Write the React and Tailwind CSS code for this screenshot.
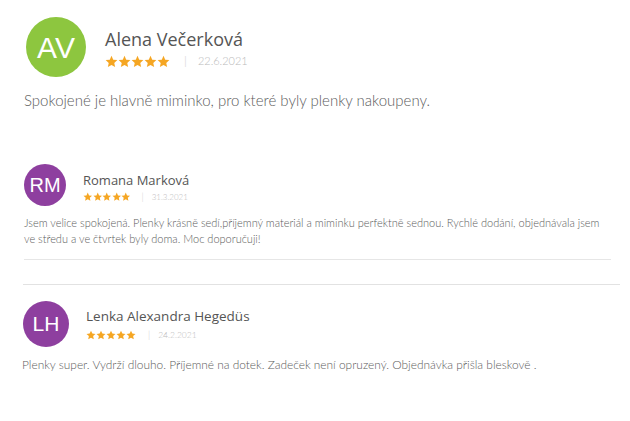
const reviews = [
  {
    initials: "AV",
    name: "Alena Večerková",
    date: "22.6.2021",
    text: "Spokojené je hlavně miminko, pro které byly plenky nakoupeny.",
    color: "bg-[#8dc63f]",
  },
];

const Star = ({ size }) => (
  <svg width={size} height={size} viewBox="0 0 24 24" fill="#f5a623">
    <path d="M12 1.5l3.2 7.1 7.6.8-5.7 5.2 1.6 7.6L12 18.3l-6.7 3.9 1.6-7.6L1.2 9.4l7.6-.8z" />
  </svg>
);

const Stars = ({ size }) => (
  <div className="flex">
    {[0, 1, 2, 3, 4].map((i) => (
      <Star key={i} size={size} />
    ))}
  </div>
);

export default function App() {
  const r = reviews[0];
  return (
    <div className="w-[630px] h-[421px] bg-white text-[#5c5c5c] font-light overflow-hidden" style={{ fontFamily: "Lato, 'Open Sans', sans-serif" }}>
      {/* big review */}
      <div className="pt-[17px]">
        <div className="flex items-center pl-[26px]">
          <div className={`w-[60px] h-[60px] rounded-full ${r.color} flex items-center justify-center text-white text-[30px] font-normal`} style={{ fontFamily: "'Liberation Sans', sans-serif" }}>
            {r.initials}
          </div>
          <div className="ml-[19px] mt-[4px]">
            <div className="text-[18px] leading-[22px] text-[#555] font-normal" style={{ fontFamily: "'Open Sans', sans-serif" }}>{r.name}</div>
            <div className="flex items-center mt-[2px]">
              <Stars size={13} />
              <span className="ml-[14px] text-[#ccc] text-[12px]">|</span>
              <span className="ml-[11px] text-[#bbb] text-[11px]">{r.date}</span>
            </div>
          </div>
        </div>
        <p className="pl-[24px] mt-[13px] text-[15px] leading-[20px]">{r.text}</p>
      </div>

      {/* second review */}
      <div className="mt-[54px] pl-[24px] pr-[18px]">
        <div className="flex items-center">
          <div className="w-[42px] h-[42px] rounded-full bg-[#8e3f9f] flex items-center justify-center text-white text-[20px] font-normal" style={{ fontFamily: "'Liberation Sans', sans-serif" }}>
            RM
          </div>
          <div className="ml-[17px] mt-[5px]">
            <div className="text-[13px] leading-[17px] text-[#555] font-normal" style={{ fontFamily: "'Open Sans', sans-serif" }}>Romana Marková</div>
            <div className="flex items-center mt-[1px]">
              <Stars size={9.5} />
              <span className="ml-[11px] text-[#ccc] text-[9px]">|</span>
              <span className="ml-[8px] text-[#bbb] text-[8px]">31.3.2021</span>
            </div>
          </div>
        </div>
        <p className="mt-[9px] text-[11px] leading-[16px]">
          Jsem velice spokojená. Plenky krásně sedí,příjemný materiál a miminku perfektně sednou. Rychlé dodání, objednávala jsem ve středu a ve čtvrtek byly doma. Moc doporučuji!
        </p>
        <div className="mt-[12px] h-px bg-[#e6e6e6] mr-[1px]" />
      </div>

      <div className="mt-[24px] ml-[23px] mr-[10px] h-px bg-[#e2e2e2]" />

      {/* third review */}
      <div className="mt-[16px] pl-[22px]">
        <div className="flex items-center">
          <div className="w-[46px] h-[46px] rounded-full bg-[#8e3f9f] flex items-center justify-center text-white text-[21px] ml-[1px] font-normal" style={{ fontFamily: "'Liberation Sans', sans-serif" }}>
            LH
          </div>
          <div className="ml-[17px] mt-[1px]">
            <div className="text-[13.5px] leading-[18px] text-[#555] font-normal" style={{ fontFamily: "'Open Sans', sans-serif" }}>Lenka Alexandra Hegedüs</div>
            <div className="flex items-center mt-[3px]">
              <Stars size={10} />
              <span className="ml-[12px] text-[#ccc] text-[9px]">|</span>
              <span className="ml-[8px] text-[#bbb] text-[8.5px]">24.2.2021</span>
            </div>
          </div>
        </div>
        <p className="mt-[10px] text-[11.9px] leading-[16px]">
          Plenky super. Vydrží dlouho. Příjemné na dotek. Zadeček není opruzený. Objednávka přišla bleskově .
        </p>
      </div>
    </div>
  );
}
